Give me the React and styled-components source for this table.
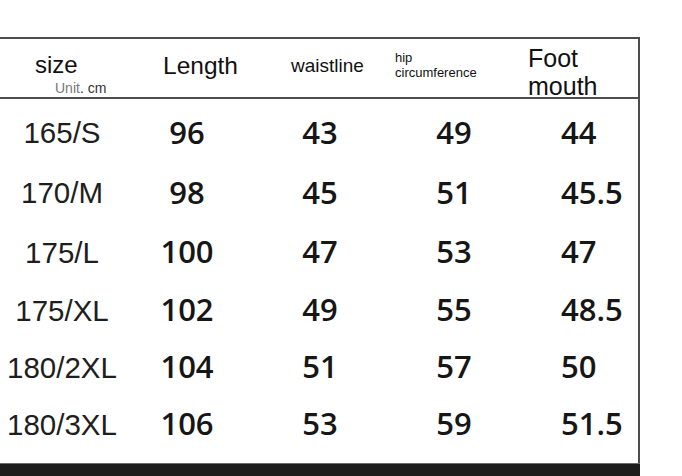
import React from 'react';
import styled, { createGlobalStyle } from 'styled-components';

const GlobalStyle = createGlobalStyle`
    html, body {
        margin: 0;
        padding: 0;
        background: #ffffff;
    }
    body {
        font-family: 'Liberation Sans', Arial, sans-serif;
        color: #1c1c1c;
    }
`;

const cols = '124px 126px 140px 128px 120px';

const Page = styled.div`
    width: 682px;
    height: 476px;
    overflow: hidden;
    padding-top: 37px;
    box-sizing: border-box;
    display: flex;
    flex-direction: column;
`;

const Sheet = styled.div`
    width: 640px;
    box-sizing: border-box;
    border-top: 2px solid #4d4d4d;
    border-right: 2px solid #4d4d4d;
    display: flex;
    flex-direction: column;
`;

const HeaderRow = styled.div`
    display: grid;
    grid-template-columns: ${cols};
    height: 58px;
    border-bottom: 2px solid #4d4d4d;
`;

const HeadCell = styled.div`
    display: flex;
    flex-direction: column;
    align-items: flex-start;
    padding-left: ${(p) => p.$pl}px;
    padding-top: ${(p) => p.$pt}px;
    font-size: ${(p) => p.$size}px;
    line-height: ${(p) => p.$lh || p.$size}px;
    color: #111;
    white-space: nowrap;
`;

const Unit = styled.div`
    margin: 2px 0 0 20px;
    font-size: 14px;
    line-height: 16px;
    color: #333;

    span {
        color: #777;
    }
`;

const Body = styled.div`
    display: grid;
    grid-template-columns: ${cols};
    grid-template-rows: 60px 60px 59px 57px 57px 57px;
    padding-top: 3px;
    height: 364px;
    box-sizing: border-box;
`;

const SizeCell = styled.div`
    display: flex;
    align-items: center;
    justify-content: center;
    font-family: 'Liberation Sans', Arial, sans-serif;
    font-size: 29.5px;
    line-height: 30px;
    color: #1e1e1e;
    white-space: nowrap;
    padding-top: 2px;
`;

const ValueCell = styled.div`
    display: flex;
    align-items: center;
    justify-content: ${(p) => (p.$left ? 'flex-start' : 'center')};
    padding-left: ${(p) => (p.$left ? 43 : 0)}px;
    font-family: 'Open Sans', 'Noto Sans', sans-serif;
    font-weight: 600;
    font-size: 31px;
    line-height: 31px;
    color: #161616;
`;

const BlackBar = styled.div`
    width: 640px;
    flex: 1;
    background: #1b1b1b;
    border-top: 1px solid #6a6a6a;
`;

const rows = [
    ['165/S', '96', '43', '49', '44'],
    ['170/M', '98', '45', '51', '45.5'],
    ['175/L', '100', '47', '53', '47'],
    ['175/XL', '102', '49', '55', '48.5'],
    ['180/2XL', '104', '51', '57', '50'],
    ['180/3XL', '106', '53', '59', '51.5'],
];

export default function App() {
    return (
        <Page>
            <GlobalStyle />
            <Sheet>
                {/* header */}
                <HeaderRow>
                    <HeadCell $pl={35} $pt={13} $size={24} $lh={26}>
                        size
                        <Unit>
                            <span>Unit</span>. cm
                        </Unit>
                    </HeadCell>
                    <HeadCell $pl={39} $pt={13} $size={24.5} $lh={28}>
                        Length
                    </HeadCell>
                    <HeadCell $pl={41} $pt={16} $size={19} $lh={22}>
                        waistline
                    </HeadCell>
                    <HeadCell $pl={5} $pt={11} $size={13} $lh={15}>
                        <div>hip</div>
                        <div>circumference</div>
                    </HeadCell>
                    <HeadCell $pl={10} $pt={5} $size={25} $lh={28}>
                        <div>Foot</div>
                        <div>mouth</div>
                    </HeadCell>
                </HeaderRow>

                {/* rows */}
                <Body>
                    {rows.map((r) => (
                        <React.Fragment key={r[0]}>
                            <SizeCell>{r[0]}</SizeCell>
                            <ValueCell>{r[1]}</ValueCell>
                            <ValueCell>{r[2]}</ValueCell>
                            <ValueCell>{r[3]}</ValueCell>
                            <ValueCell $left>{r[4]}</ValueCell>
                        </React.Fragment>
                    ))}
                </Body>
            </Sheet>
            <BlackBar />
        </Page>
    );
}
